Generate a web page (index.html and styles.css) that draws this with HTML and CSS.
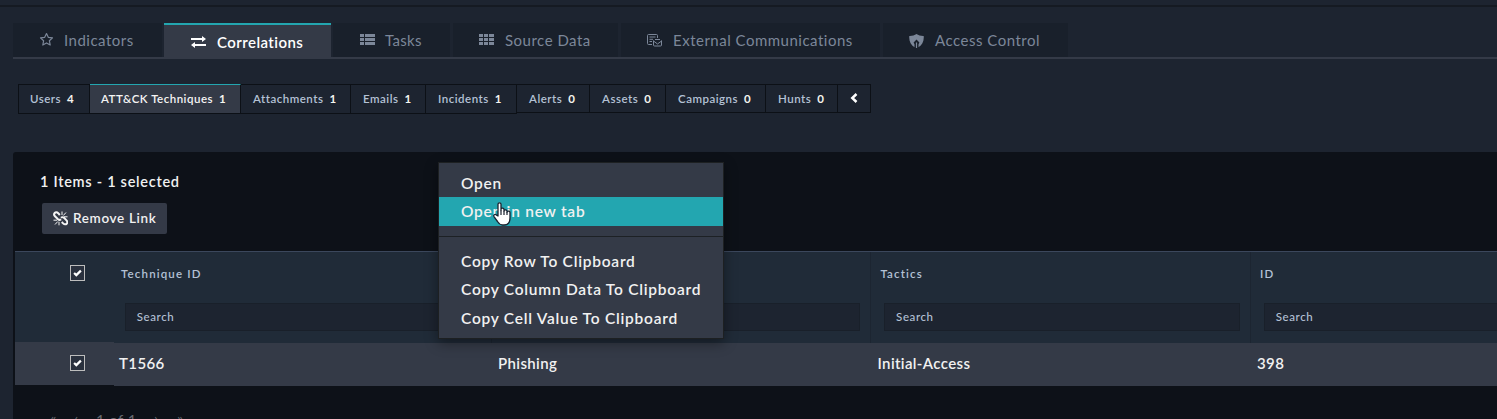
FILE: index.html
```html
<!DOCTYPE html>
<html lang="en">
<head>
<meta charset="utf-8">
<title>Correlations</title>
<link rel="stylesheet" href="styles.css">
</head>
<body>
<div class="topbar"></div>
<nav class="tabs">
  <div class="tab w-ind"><svg class="ic" width="15" height="15" viewBox="0 0 15 15"><path d="M7.500 1.500l1.800 3.800 4.200.6-3.100 2.900.8 4.200-3.700-2.100L3.800 13l.8-4.200L1.500 5.900l4.200-.6z" fill="none" stroke="currentColor" stroke-width="1.200" stroke-linejoin="round"/></svg><span>Indicators</span></div>
  <div class="tab active w-cor"><svg class="ic" width="15" height="12" viewBox="0 0 15 12"><path d="M0 2h11V0l4 3-4 3V4H0zM15 8H4V6L0 9l4 3v-2h11z" fill="currentColor"/></svg><span>Correlations</span></div>
  <div class="tab w-tas"><svg class="ic" width="15" height="11" viewBox="0 0 15 11"><path d="M0 0h4v3H0zM5 0h10v3H5zM0 4h4v3H0zM5 4h10v3H5zM0 8h4v3H0zM5 8h10v3H5z" fill="currentColor"/></svg><span>Tasks</span></div>
  <div class="tab w-src"><svg class="ic" width="15" height="11" viewBox="0 0 15 11"><path d="M0 0h4v3H0zM5 0h4v3H5zM10 0h5v3h-5zM0 4h4v3H0zM5 4h4v3H5zM10 4h5v3h-5zM0 8h4v3H0zM5 8h4v3H5zM10 8h5v3h-5z" fill="currentColor"/></svg><span>Source Data</span></div>
  <div class="tab w-ext"><svg class="ic low" width="15" height="13" viewBox="0 0 15 13"><g fill="none" stroke="currentColor"><path d="M5 10.500H1.500a1 1 0 0 1-1-1v-8a1 1 0 0 1 1-1h8a1 1 0 0 1 1 1V4M2.500 3h6M2.500 5.300h3.500M2.500 7.500h2.500"/><path d="M6.500 6.500v4.500a1 1 0 0 0 1 1h6a1 1 0 0 0 1-1V6.500M6.500 7l4 3 4-3M8 5.500h5"/></g></svg><span>External Communications</span></div>
  <div class="tab w-acc"><svg class="ic low" width="15" height="14" viewBox="0 0 15 14"><path fill-rule="evenodd" d="M7.500 0C5.500 1.400 3 2 .3 1.900c-.5 5 1.500 9.100 5.200 11.400V10.200L4.600 8.500 7.500 5.500l2.900 3-.9 1.700v3.100c3.700-2.300 5.700-6.400 5.200-11.400C12 2 9.500 1.400 7.500 0zM6.900 8.500h1.200V14H6.900z" fill="currentColor"/></svg><span>Access Control</span></div>
</nav>
<nav class="subs">
  <div class="sub s1">Users<b>4</b></div>
  <div class="sub s2 on">ATT&amp;CK Techniques<b>1</b></div>
  <div class="sub s3">Attachments<b>1</b></div>
  <div class="sub s4">Emails<b>1</b></div>
  <div class="sub s5">Incidents<b>1</b></div>
  <div class="sub s6 short">Alerts<b>0</b></div>
  <div class="sub s7 short">Assets<b>0</b></div>
  <div class="sub s8 short">Campaigns<b>0</b></div>
  <div class="sub s9 short">Hunts<b>0</b></div>
  <div class="sub s10 short"><svg width="8" height="10" viewBox="0 0 8 10"><path d="M6.500 1L2.300 5l4.200 4" fill="none" stroke="#fff" stroke-width="2.500"/></svg></div>
</nav>
<main class="panel">
  <div class="count">1 Items - 1 selected</div>
  <button class="remove"><svg width="15" height="15" viewBox="0 0 15 15"><g fill="none" stroke="#f4f4f4"><path d="M6.800 4L5.200 2.200C4 1 2.500 1.100 1.700 2 .9 2.900 1 4.300 2 5.300L5 8.200c1 .9 2.200.8 3 0M8 6.800c.9-.9 2.200-.8 3 0l2.500 2.600c1 1.100 1 2.500.2 3.300-.9.900-2.300.9-3.300-.1L8.700 11" stroke-width="2"/><path d="M9 4V.5M10.300 4.500L13 1.500M11 5.800h3.500M6 10.800v3.500M4.800 10.500L2 13.500M4 9.200H.5"/></g></svg><span>Remove Link</span></button>
  <div class="grid">
    <div class="head">
      <div class="c0"><i class="box"><svg width="9" height="8" viewBox="0 0 9 8"><path d="M1.100 4l2.200 2.100L7.900 1.600" fill="none" stroke="#fff" stroke-width="2.200"/></svg></i></div>
      <div class="col"><div class="label">Technique ID</div><div class="search">Search</div></div>
      <div class="col"><div class="label"></div><div class="search"></div></div>
      <div class="col"><div class="label">Tactics</div><div class="search">Search</div></div>
      <div class="col"><div class="label">ID</div><div class="search">Search</div></div>
    </div>
    <div class="row">
      <div class="r0"><i class="box"><svg width="9" height="8" viewBox="0 0 9 8"><path d="M1.100 4l2.200 2.100L7.900 1.600" fill="none" stroke="#fff" stroke-width="2.200"/></svg></i></div>
      <div class="cell first">T1566</div><div class="cell">Phishing</div><div class="cell">Initial-Access</div><div class="cell">398</div>
    </div>
  </div>
  <div class="pager"><span class="p1">«</span><span class="p2">‹</span><span class="p3">1 of 1</span><span class="p4">›</span><span class="p5">»</span></div>
</main>
<div class="menu">
  <div class="item">Open</div>
  <div class="item hover">Open in new tab</div>
  <div class="rule"></div>
  <div class="item">Copy Row To Clipboard</div>
  <div class="item up">Copy Column Data To Clipboard</div>
  <div class="item">Copy Cell Value To Clipboard</div>
</div>
<svg class="cursor" width="18" height="24" viewBox="0 0 18 24"><path d="M5 14V2.200C5 .4 8 .4 8 2.200V8.500V7.200c0-1.600 3-1.400 3 .2V9c0-1.600 3-1.400 3 .2v1c0-1.500 3-1.300 3 .4V16c0 4-2 7-6 7H9.500C7 23 5.500 21 4.500 19.500L1 14.600c-1-1.700 1-2.900 2.200-1.700z" fill="#fff" stroke="#1b2330" stroke-width="1.300" stroke-linejoin="round"/><path d="M8 8.500V13M11 9v4M14 10v3" stroke="#1b2330" stroke-width="1.200"/></svg>
</body>
</html>
```
FILE: styles.css
```css
* { box-sizing: border-box; }
body {
  margin: 0;
  width: 1497px;
  height: 419px;
  overflow: hidden;
  background: #1d2430;
  color: #f1f1f1;
  font-family: Lato, sans-serif;
  font-weight: 500;
}
svg { display: block; flex: none; }
.topbar { height: 7px; border-bottom: 2px solid #151a22; }
.tabs {
  display: flex;
  margin: 16px 0 0 13px;
  height: 36px;
  border-bottom: 2px solid #343a47;
}
.tab {
  display: flex;
  align-items: center;
  height: 34px;
  margin-right: 2px;
  padding: 0 0 1px 26px;
  background: #19202b;
  color: #7c8799;
  font-size: 15px;
  font-weight: 400;
  letter-spacing: .5px;
  white-space: nowrap;
}
.tab .ic { margin-right: 11px; }
.tab .low { position: relative; top: 1px; }
.tab.active {
  border-top: 2px solid #23a6b0;
  background: #343a47;
  color: #fff;
  font-weight: 600;
  letter-spacing: .45px;
  padding: 1px 0 0 27px;
}
.w-ind { width: 149px; }
.w-ind .ic { margin-right: 10px; }
.w-cor { width: 167px; }
.w-tas { width: 117px; margin-right: 3px; }
.tab.w-tas { padding-left: 27px; letter-spacing: .3px; }
.w-tas .ic { margin-right: 10px; }
.w-src { width: 165px; margin-right: 3px; }
.w-ext { width: 259px; margin-right: 3px; }
.w-acc { width: 185px; }
.subs { display: flex; margin: 25px 0 0 18px; height: 30px; }
.sub {
  display: flex;
  align-items: center;
  height: 30px;
  padding: 0 0 2px 12px;
  border: 1px solid #0c1016;
  border-left-width: 0;
  color: #b4c1d5;
  font-size: 11.500px;
  font-weight: 600;
  letter-spacing: .5px;
  white-space: nowrap;
}
.sub b { margin-left: 6px; color: #f4f4ef; font-weight: 700; }
.sub.short { height: 29px; padding-bottom: 1px; }
.sub.on { background: #343a47; color: #f4f4f4; border-top-color: #23a6b0; padding-left: 11px; }
.s1 { width: 72px; border-left-width: 1px; }
.sub.s1 { padding-left: 11px; }
.s2 { width: 151px; }
.s3 { width: 110px; }
.s4 { width: 75px; }
.s5 { width: 91px; }
.s6 { width: 73px; }
.s7 { width: 76px; }
.s8 { width: 100px; }
.s9 { width: 72px; }
.s10 { width: 33px; }
.panel {
  margin: 38px 0 0 13px;
  height: 267px;
  overflow: hidden;
  border-radius: 3px 0 0 0;
  background: #0d1118;
}
.count { padding: 20px 0 0 27px; font-size: 14.500px; line-height: 20px; font-weight: 600; letter-spacing: .72px; }
.remove {
  display: flex;
  align-items: center;
  gap: 5px;
  width: 125px;
  height: 31px;
  margin: 11px 0 0 29px;
  padding: 0 0 1px 11px;
  border: 0;
  border-radius: 2px;
  background: #343a47;
  color: #f1f1f1;
  font: 600 13.500px Lato, sans-serif;
  letter-spacing: .65px;
  white-space: nowrap;
}
.grid { margin: 17px 0 0 2px; width: 1700px; }
.head { display: flex; height: 92px; border-top: 1px solid #3b475c; background: #202b38; }
.c0 { width: 97px; padding: 13px 0 0 55px; }
.box {
  display: flex;
  align-items: center;
  justify-content: center;
  width: 15px;
  height: 16px;
  border: 1px solid #bdbdbd;
  background: #2a313e;
}
.col { width: 379.700px; flex: none; border-right: 1px solid #1c2531; }
.label {
  height: 30px;
  padding: 14px 0 0 9px;
  color: #b4c1d5;
  font-size: 11.500px;
  line-height: 16px;
  font-weight: 600;
  letter-spacing: 1.150px;
}
.search {
  width: 356px;
  height: 28px;
  margin: 21px 0 0 12.700px;
  padding-left: 11px;
  border: 1px solid #19202a;
  background: #1d2430;
  color: #b4c1d5;
  font-size: 11.500px;
  font-weight: 500;
  line-height: 26px;
  letter-spacing: .6px;
}
.row { display: flex; height: 43px; background: #343a47; }
.r0 { width: 99px; height: 43px; margin-top: -1px; padding: 13px 0 0 55px; background: #343a47; box-shadow: 0 1px 0 #0d1118; }
.cell { width: 379.500px; flex: none; padding-left: 5px; font-size: 15px; line-height: 41px; letter-spacing: .38px; font-weight: 600; }
.cell.first { width: 379px; }
.pager { display: flex; margin: 24px 0 0 37px; font-size: 15px; line-height: 20px; font-weight: 400; letter-spacing: .4px; color: #66696f; }
.p1 { width: 24px; }
.p2 { width: 22px; }
.p3 { width: 58px; }
.p4 { width: 23px; }
.p1, .p2, .p4, .p5 { margin-top: -2px; }
.menu {
  position: absolute;
  left: 438px;
  top: 162px;
  width: 286px;
  height: 177px;
  padding-top: 7px;
  border: 1px solid #1d2022;
  background: #343a47;
  box-shadow: 0 4px 12px rgba(0, 0, 0, .4);
}
.item {
  height: 28.500px;
  padding-left: 22px;
  font-size: 15.500px;
  line-height: 28px;
  font-weight: 600;
  letter-spacing: .75px;
  white-space: nowrap;
}
.item:first-child { height: 27px; line-height: 26px; }
.item.hover { height: 29px; background: #23a6b0; }
.item.up { line-height: 27px; }
.rule { height: 1px; margin: 10px 0; background: #1d2125; }
.cursor { position: absolute; left: 493px; top: 202px; }
```
